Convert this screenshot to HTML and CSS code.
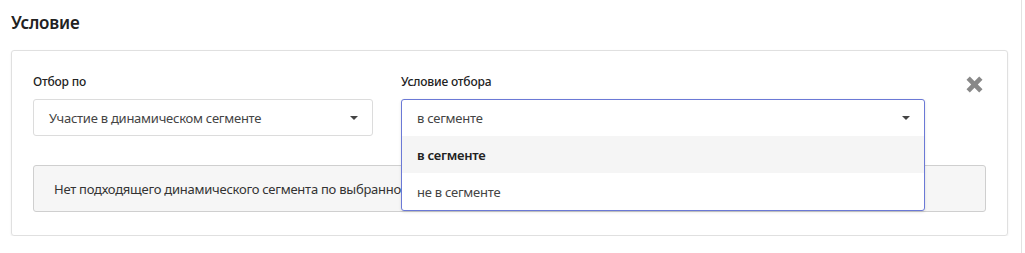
FILE: index.html
```html
<!DOCTYPE html>
<html lang="ru">
<head>
<meta charset="utf-8">
<link rel="stylesheet" href="styles.css">
</head>
<body>
<div class="page">
  <h2 class="title">Условие</h2>
  <div class="card">
    <div class="row">
      <div class="field field-a">
        <div class="label">Отбор по</div>
        <div class="select">
          <span class="value">Участие в динамическом сегменте</span>
          <span class="caret"></span>
        </div>
      </div>
      <div class="field field-b">
        <div class="label">Условие отбора</div>
        <div class="select-wrap">
          <div class="select-open">
            <div class="select-head">
              <span class="value">в сегменте</span>
              <span class="caret"></span>
            </div>
            <div class="option active">в сегменте</div>
            <div class="option">не в сегменте</div>
          </div>
        </div>
      </div>
      <div class="close">
        <svg width="17" height="17" viewBox="0 0 17 17"><path d="M0.5 3.8 L3.8 0.5 L8.5 5.2 L13.2 0.5 L16.5 3.8 L11.8 8.5 L16.5 13.2 L13.2 16.5 L8.5 11.8 L3.8 16.5 L0.5 13.2 L5.2 8.5 Z" fill="#888"/></svg>
      </div>
    </div>
    <div class="info">Нет подходящего динамического сегмента по выбранному условию</div>
  </div>
</div>
<div class="edge"></div>
</body>
</html>
```
FILE: styles.css
```css
html, body {
  margin: 0;
  padding: 0;
  background: #fff;
  font-family: "Noto Sans", "Open Sans", sans-serif;
  color: #333;
}
.page {
  padding: 0 17px 0 11px;
}
.title {
  margin: 0;
  padding-top: 12px;
  font-size: 17px;
  line-height: 22px;
  font-weight: 600;
  color: #222;
  letter-spacing: -0.2px;
}
.card {
  margin-top: 16px;
  border: 1px solid #e0e0e0;
  border-radius: 3px;
  box-shadow: 0 1px 2px rgba(0,0,0,0.08);
  padding: 23px 21px 23px 21px;
}
.row {
  display: flex;
  align-items: flex-start;
}
.field-a { width: 340px; }
.field-b { width: 524px; margin-left: 28px; }
.label {
  font-size: 12px;
  line-height: 16px;
  font-weight: 500;
  color: #222;
  margin-bottom: 9px;
  letter-spacing: -0.2px;
}
.select {
  height: 35px;
  border: 1px solid #dcdcdc;
  border-radius: 3px;
  display: flex;
  align-items: center;
  padding: 0 14px 0 15px;
  font-size: 13px;
  letter-spacing: -0.25px;
  color: #444;
}
.value { flex: 1; }
.caret {
  width: 0; height: 0;
  border-left: 4px solid transparent;
  border-right: 4px solid transparent;
  border-top: 4px solid #444;
}
.select-wrap {
  position: relative;
  height: 37px;
}
.select-open {
  position: absolute;
  left: 0; top: 0; right: 0;
  z-index: 2;
  background: #fff;
  border: 1px solid #6b79d6;
  border-radius: 3px;
  box-shadow: 0 1px 3px rgba(0,0,0,0.12);
  font-size: 13px;
  letter-spacing: -0.25px;
  color: #444;
}
.select-head {
  height: 36px;
  display: flex;
  align-items: center;
  padding: 0 14px 0 15px;
}
.option {
  height: 37px;
  display: flex;
  align-items: center;
  padding: 0 15px;
}
.option.active {
  background: #f5f5f5;
  font-weight: 600;
  color: #222;
}
.close {
  margin-left: 41px;
  margin-top: 2px;
  width: 17px;
  height: 17px;
}
.info {
  margin-top: 29px;
  height: 45px;
  display: flex;
  align-items: center;
  padding-left: 20px;
  background: #f6f6f6;
  border: 1px solid #cfcfcf;
  border-radius: 3px;
  font-size: 13px;
  letter-spacing: -0.25px;
  color: #333;
  white-space: nowrap;
  overflow: hidden;
}
.edge {
  position: fixed;
  top: 0; bottom: 0;
  left: 1021px;
  width: 1px;
  background: #e2e2e2;
}
```
